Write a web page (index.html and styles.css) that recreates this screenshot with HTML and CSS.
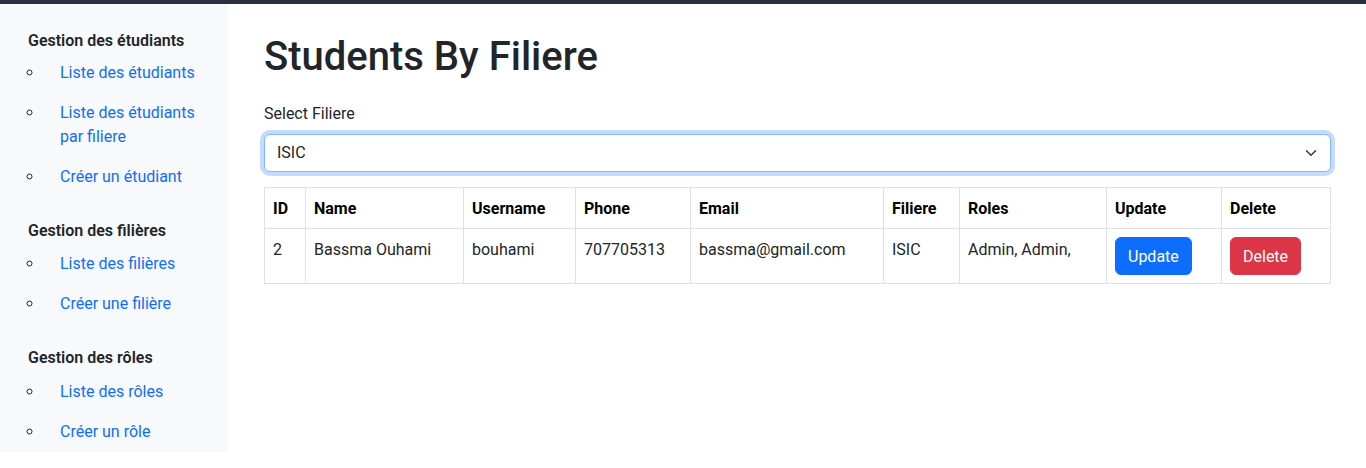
FILE: index.html
```html
<!DOCTYPE html>
<html lang="fr">
<head>
<meta charset="utf-8">
<title>Students By Filiere</title>
<link rel="stylesheet" href="styles.css">
</head>
<body>
<div class="topbar"></div>
<div class="layout">
  <aside class="sidebar">
    <h6 class="side-title">Gestion des étudiants</h6>
    <ul class="side-list">
      <li><a href="#">Liste des étudiants</a></li>
      <li><a href="#">Liste des étudiants par filiere</a></li>
      <li><a href="#">Créer un étudiant</a></li>
    </ul>
    <h6 class="side-title">Gestion des filières</h6>
    <ul class="side-list side-list-2">
      <li><a href="#">Liste des filières</a></li>
      <li><a href="#">Créer une filière</a></li>
    </ul>
    <h6 class="side-title">Gestion des rôles</h6>
    <ul class="side-list side-list-3">
      <li><a href="#">Liste des rôles</a></li>
      <li><a href="#">Créer un rôle</a></li>
    </ul>
  </aside>
  <main class="main">
    <h1 class="page-title">Students By Filiere</h1>
    <label class="form-label" for="filiere">Select Filiere</label>
    <div class="select-wrap">
      <select id="filiere" class="form-select">
        <option>ISIC</option>
      </select>
      <svg class="chev" width="12" height="12" viewBox="0 0 16 16"><path d="M2 5l6 6 6-6" fill="none" stroke="#343a40" stroke-width="2" stroke-linecap="round" stroke-linejoin="round"/></svg>
    </div>
    <table class="table">
      <colgroup>
        <col class="c-id"><col class="c-name"><col class="c-user"><col class="c-phone"><col class="c-email"><col class="c-fil"><col class="c-roles"><col class="c-upd"><col class="c-del">
      </colgroup>
      <thead>
        <tr><th>ID</th><th>Name</th><th>Username</th><th>Phone</th><th>Email</th><th>Filiere</th><th>Roles</th><th>Update</th><th>Delete</th></tr>
      </thead>
      <tbody>
        <tr>
          <td>2</td><td>Bassma Ouhami</td><td>bouhami</td><td>707705313</td><td>bassma@gmail.com</td><td>ISIC</td><td>Admin, Admin,</td>
          <td><button class="btn btn-primary">Update</button></td>
          <td><button class="btn btn-danger">Delete</button></td>
        </tr>
      </tbody>
    </table>
  </main>
</div>
</body>
</html>
```

FILE: styles.css
```css
* { box-sizing: border-box; }
html, body { margin: 0; padding: 0; }
body {
  font-family: "Segoe UI", Roboto, "Liberation Sans", sans-serif;
  font-size: 16px;
  line-height: 1.5;
  color: #212529;
  background: #fff;
}
.topbar { height: 4px; background: #2c2f40; }
.layout { display: flex; align-items: flex-start; }
.sidebar {
  width: 228px;
  flex: 0 0 228px;
  background: #f8f9fa;
  padding: 25px 0 0 28px;
}
.side-title {
  margin: 22px 0 0 0;
  font-size: 16px;
  font-weight: 600;
  line-height: 24px;
  color: #212529;
}
.side-title:first-child { margin-top: 0; }
.side-list {
  list-style: circle;
  margin: 0;
  padding: 0 0 0 16px;
}
.side-list-2 { margin-top: 1px; }
.side-list-3 { margin-top: 2px; }
.side-list li { padding: 8px 16px 8px 16px; }
.side-list li::marker { color: #212529; }
.side-list a { color: #0d6efd; text-decoration: none; display: block; }
.main { flex: 1; padding: 29px 36px 0 36px; }
.page-title {
  margin: 0 0 21px 0;
  font-size: 40px;
  font-weight: 500;
  line-height: 48px;
}
.form-label { display: block; margin-bottom: 8px; }
.select-wrap { position: relative; margin-bottom: 15px; }
.form-select {
  display: block;
  width: 100%;
  height: 38px;
  padding: 6px 36px 6px 12px;
  font: inherit;
  color: #212529;
  background: #fff;
  border: 1px solid #86b7fe;
  border-radius: 6px;
  box-shadow: 0 0 0 4px rgba(13, 110, 253, 0.25);
  appearance: none;
  -webkit-appearance: none;
  outline: none;
}
.chev { position: absolute; right: 14px; top: 13px; pointer-events: none; }
.table {
  width: 100%;
  border-collapse: collapse;
  table-layout: fixed;
  vertical-align: top;
}
.table th, .table td {
  border: 1px solid #dee2e6;
  padding: 9px 8px 7px 8px;
  text-align: left;
  vertical-align: top;
}
.table th { font-weight: 700; color: #000; }
.table td .btn { margin: -1px 0 1px 0; }
.c-id { width: 41px; }
.c-name { width: 158px; }
.c-user { width: 112px; }
.c-phone { width: 115px; }
.c-email { width: 193px; }
.c-fil { width: 76px; }
.c-roles { width: 147px; }
.c-upd { width: 115px; }
.c-del { width: 109px; }
.btn {
  font: inherit;
  line-height: 24px;
  padding: 7px 12px 5px 12px;
  border: 1px solid transparent;
  border-radius: 6px;
  color: #fff;
  cursor: pointer;
}
.btn-primary { background: #0d6efd; border-color: #0d6efd; }
.btn-danger { background: #dc3545; border-color: #dc3545; }
```
